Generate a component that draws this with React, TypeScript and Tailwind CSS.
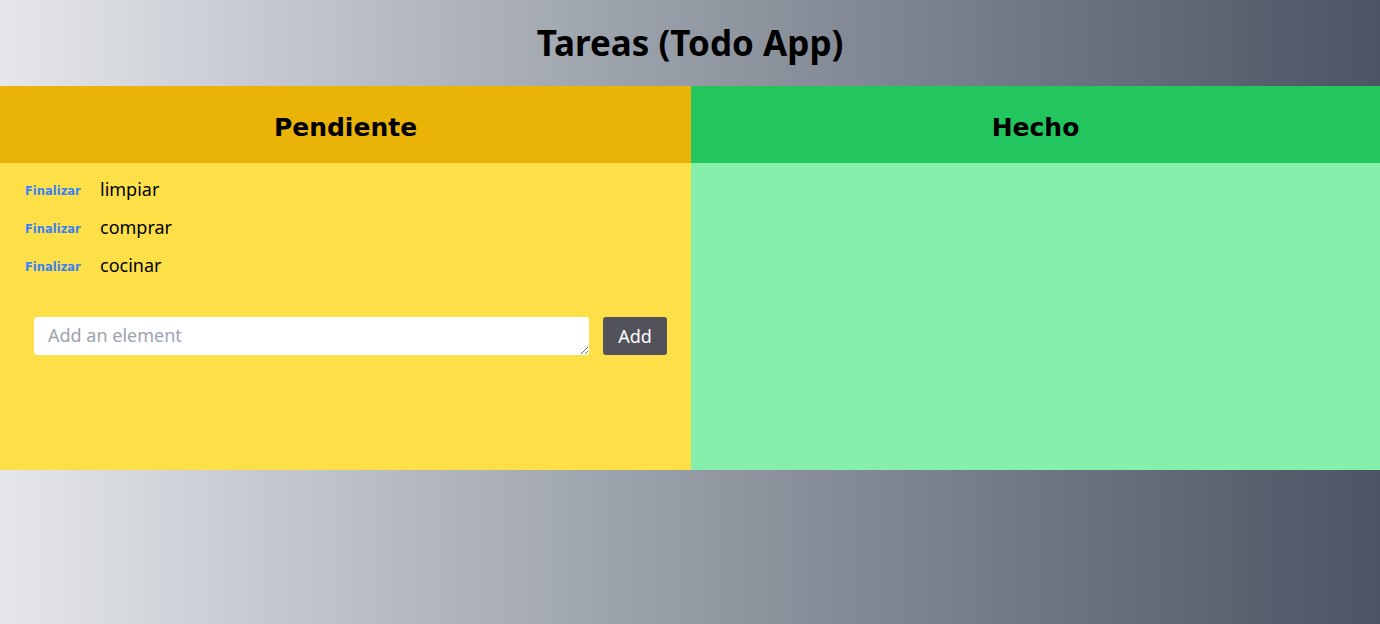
import React from "react";

export default function App() {
  const items = ["limpiar", "comprar", "cocinar"];
  return (
    <div className="min-h-[624px] w-full bg-gradient-to-r from-[#e5e7eb] to-[#4b5563] font-['Noto_Sans',sans-serif] text-black">
      <h1 className="flex h-[86px] items-center justify-center text-[35px] font-bold">Tareas (Todo App)</h1>
      <div className="grid h-[384px] grid-cols-[691px_1fr]">
        <div className="flex flex-col bg-[#fde047]">
          <h2 className="flex h-[77px] items-center justify-center bg-[#eab308] pt-[6px] font-['DejaVu_Sans',sans-serif] text-[25px] font-bold">Pendiente</h2>
          <ul className="flex flex-col pt-[7px]">
            {items.map((t) => (
              <li key={t} className="flex h-[38px] items-center">
                <button className="ml-[25px] w-[75px] pt-[5px] text-left font-['DejaVu_Sans',sans-serif] text-[11.5px] font-bold text-[#3b82f6]">Finalizar</button>
                <span className="text-[18px]">{t}</span>
              </li>
            ))}
          </ul>
          <div className="mt-[33px] flex items-center gap-[14px] pl-[34px]">
            <textarea
              placeholder="Add an element"
              rows={1}
              className="h-[38px] w-[555px] rounded-[3px] bg-white px-[14px] py-[5px] text-[18px] leading-[26px] text-black outline-none placeholder:text-[#9ca3af]"
            />
            <button className="h-[38px] w-[64px] rounded-[3px] bg-[#52525b] text-[18px] text-white">Add</button>
          </div>
        </div>
        <div className="flex flex-col bg-[#86efac]">
          <h2 className="flex h-[77px] items-center justify-center bg-[#22c55e] pt-[6px] font-['DejaVu_Sans',sans-serif] text-[25px] font-bold">Hecho</h2>
        </div>
      </div>
    </div>
  );
}
